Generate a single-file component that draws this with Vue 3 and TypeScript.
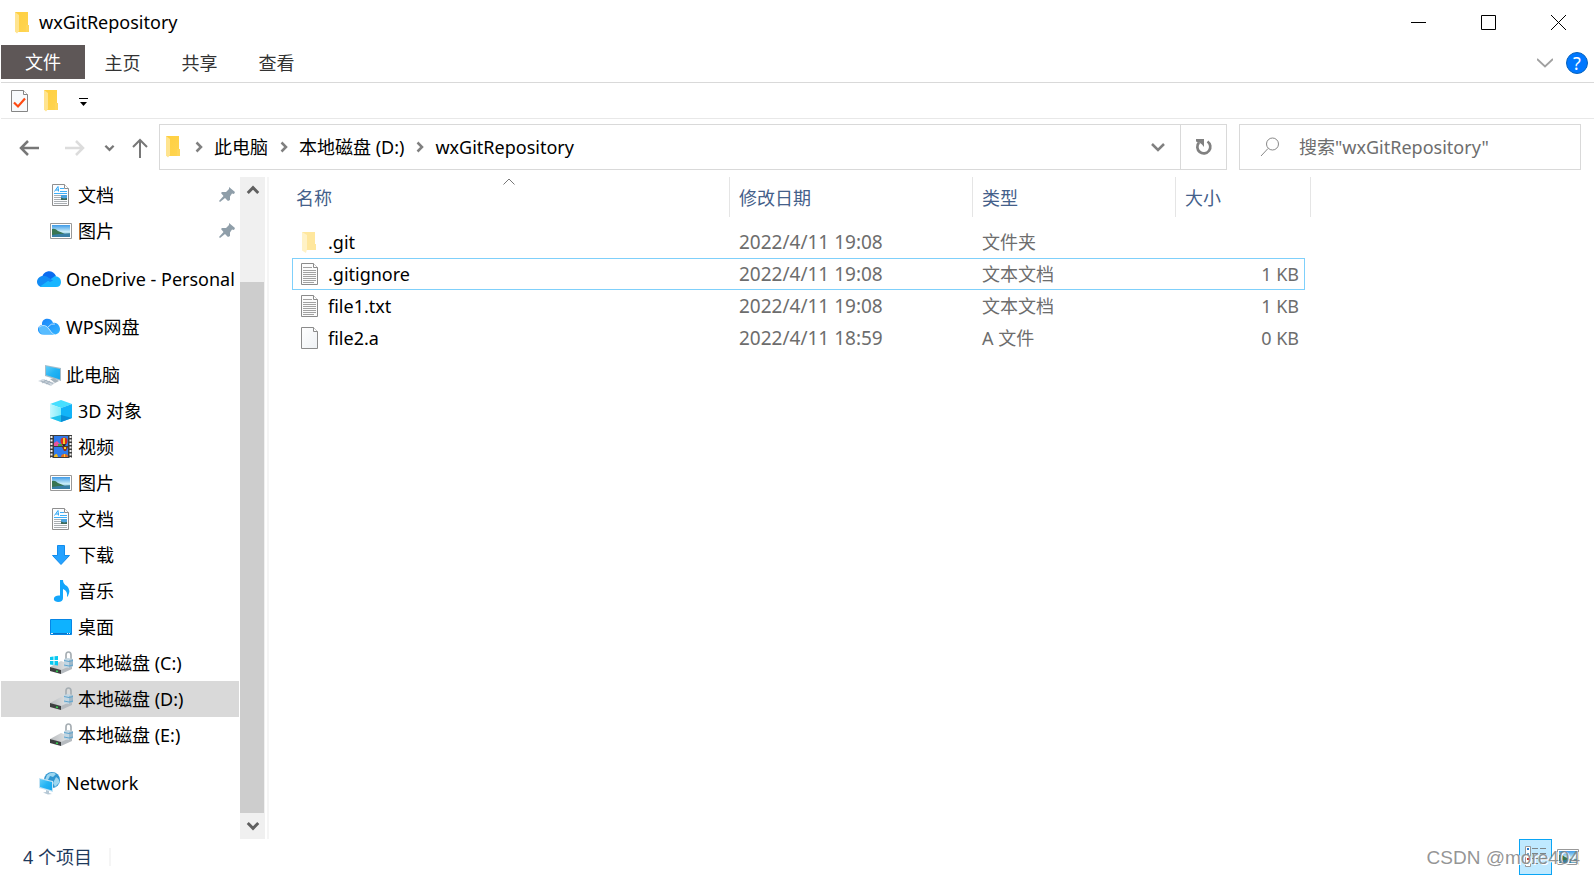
<script setup lang="ts">
import { ref } from 'vue'

interface NavItem {
  label: string
  icon: string
  level: 1 | 2
  pinned?: boolean
  spaced?: boolean
  selected?: boolean
}

interface FileRow {
  name: string
  icon: string
  date: string
  type: string
  size: string
  focused?: boolean
}

const title = 'wxGitRepository'
const query = ref('')
const tabs = ['主页', '共享', '查看']
const crumbs = ['此电脑', '本地磁盘 (D:)', title]

const nav: NavItem[] = [
  { label: '文档', icon: 'document', level: 2, pinned: true },
  { label: '图片', icon: 'picture', level: 2, pinned: true },
  { label: 'OneDrive - Personal', icon: 'onedrive', level: 1, spaced: true },
  { label: 'WPS网盘', icon: 'wps', level: 1, spaced: true },
  { label: '此电脑', icon: 'pc', level: 1, spaced: true },
  { label: '3D 对象', icon: 'cube', level: 2 },
  { label: '视频', icon: 'video', level: 2 },
  { label: '图片', icon: 'picture', level: 2 },
  { label: '文档', icon: 'document', level: 2 },
  { label: '下载', icon: 'download', level: 2 },
  { label: '音乐', icon: 'music', level: 2 },
  { label: '桌面', icon: 'desktop', level: 2 },
  { label: '本地磁盘 (C:)', icon: 'disk-system', level: 2 },
  { label: '本地磁盘 (D:)', icon: 'disk', level: 2, selected: true },
  { label: '本地磁盘 (E:)', icon: 'disk', level: 2 },
  { label: 'Network', icon: 'network', level: 1, spaced: true },
]

const files: FileRow[] = [
  { name: '.git', icon: 'folder-hidden', date: '2022/4/11 19:08', type: '文件夹', size: '' },
  { name: '.gitignore', icon: 'text', date: '2022/4/11 19:08', type: '文本文档', size: '1 KB', focused: true },
  { name: 'file1.txt', icon: 'text', date: '2022/4/11 19:08', type: '文本文档', size: '1 KB' },
  { name: 'file2.a', icon: 'blank', date: '2022/4/11 18:59', type: 'A 文件', size: '0 KB' },
]
</script>

<template>
  <svg class="sprite" aria-hidden="true">
    <defs>
      <linearGradient id="g-folder" x1="0" y1="0" x2="1" y2="1">
        <stop offset="0" stop-color="#ffcf3f" /><stop offset="1" stop-color="#ffd552" />
      </linearGradient>
      <linearGradient id="g-sky" x1="0" y1="0" x2="0" y2="1">
        <stop offset="0" stop-color="#3f9be8" /><stop offset="0.55" stop-color="#c9ecf7" /><stop offset="1" stop-color="#58a8c8" />
      </linearGradient>
      <linearGradient id="g-screen" x1="0" y1="0" x2="1" y2="1">
        <stop offset="0" stop-color="#62cdf8" /><stop offset="0.5" stop-color="#23b4f4" /><stop offset="1" stop-color="#12a5ee" />
      </linearGradient>
      <linearGradient id="g-wps" x1="0" y1="0" x2="1" y2="1">
        <stop offset="0" stop-color="#1480fa" /><stop offset="1" stop-color="#35b4ff" />
      </linearGradient>
      <linearGradient id="g-cube" x1="0" y1="0" x2="1" y2="0">
        <stop offset="0" stop-color="#c4f8ff" /><stop offset="1" stop-color="#7cecfb" />
      </linearGradient>
      <linearGradient id="g-disk" x1="0" y1="0" x2="1" y2="0">
        <stop offset="0" stop-color="#b9bcbf" /><stop offset="1" stop-color="#eceeef" />
      </linearGradient>
      <linearGradient id="g-page" x1="0" y1="0" x2="1" y2="1">
        <stop offset="0" stop-color="#ffffff" /><stop offset="1" stop-color="#eef1f4" />
      </linearGradient>
    </defs>

    <symbol id="i-folder" viewBox="0 0 24 24">
      <path d="M5 1h13v14h1v6H7z" fill="url(#g-folder)" />
      <path d="M5 1l4 3v16l-2 2.500-2-2z" fill="#ffe48f" />
      <path d="M16 14h3v7h-3z" fill="#ffd65a" />
    </symbol>
    <symbol id="i-folder-hidden" viewBox="0 0 24 24">
      <path d="M5 2h13v12h1v6H8z" fill="#ffe79d" />
      <path d="M5 2l5 3v14l-1 4-4-2.500z" fill="#fff2c6" />
    </symbol>
    <symbol id="i-blank" viewBox="0 0 24 24">
      <path d="M4.500 1.500h12l4 4v17h-16z" fill="url(#g-page)" stroke="#8b8b8b" />
      <path d="M16.500 1.500v4h4" fill="#fff" stroke="#8b8b8b" />
    </symbol>
    <symbol id="i-text" viewBox="0 0 24 24">
      <path d="M4.500 1.500h12l4 4v17h-16z" fill="#fcfcfc" stroke="#8b8b8b" />
      <path d="M16.500 1.500v4h4" fill="#fff" stroke="#8b8b8b" />
      <path d="M6 5.500h9M6 8.500h13M6 10.500h13M6 12.500h13M6 14.500h13M6 16.500h13M6 18.500h13M6 20.500h11" stroke="#a2a2a2" />
    </symbol>
    <symbol id="i-check" viewBox="0 0 24 24">
      <path d="M4.500 1.500h12l4 4v17h-16z" fill="#f8fafc" stroke="#858585" />
      <path d="M16.500 1.500v4h4" fill="#fff" stroke="#858585" />
      <path d="M7 13.500l4 4 7-8" fill="none" stroke="#ff4a12" stroke-width="2.200" />
    </symbol>
    <symbol id="i-document" viewBox="0 0 24 24">
      <path d="M3.500 1.500h12l4 4v17h-16z" fill="#fcfdff" stroke="#8f8f8f" />
      <path d="M15.500 1.500v4h4" fill="#fff" stroke="#8f8f8f" />
      <path d="M5.500 8.500l3.500-5 0.500 5M7 7h3" fill="none" stroke="#2aa5f5" />
      <path d="M11 5.500h4M11 8.500h7M5 10.500h13" stroke="#3fb0f8" />
      <path d="M5 12.500h7M5 14.500h7M5 16.500h7M5 18.500h13M5 20.500h13" stroke="#a9aeb2" />
      <path d="M12 12h6v5h-6z" fill="#4ba3df" /><path d="M12 14.500l3 1 3-0.500v2h-6z" fill="#3c6a5a" />
    </symbol>
    <symbol id="i-picture" viewBox="0 0 24 24">
      <path d="M1.500 4.500h21v15h-21z" fill="#fff" stroke="#999" />
      <path d="M3 6h18v12H3z" fill="url(#g-sky)" />
      <path d="M3 10q3-1 6 2 4 1.500 7 3l5-0.500V15q-8 1-12 1H3z" fill="#397552" />
      <path d="M3 16q8-2 18-1.500V18H3z" fill="#397fa5" />
    </symbol>
    <symbol id="i-onedrive" viewBox="0 0 24 24">
      <path d="M5 10C7 3 16 2 19 9L14 14z" fill="#0a6cf0" />
      <path d="M1.500 18.500C-2 15 1 9 6 9q2-0.500 4 1l9 6-5 4H5q-2 0-3.500-1.500z" fill="#128cf5" />
      <path d="M3 19.500L18 9Q24 10 24 15q0 5-5 5H5z" fill="#18b6ff" />
      <path d="M5 10q4-2 7 1l4 2.500-3 1.500z" fill="#128cf5" />
    </symbol>
    <symbol id="i-wps" viewBox="0 0 24 24">
      <path d="M5 10C4 2 15 2 16 8c5-1 7 4 7 6 0 4-3 5.500-6 5.500H6C0 19-1 11 5 10z" fill="url(#g-wps)" />
      <path d="M2 12q6-4 10 2t6 5.500H7q-6-1-5-7.500z" fill="#58bcff" />
      <path d="M2 12q6-4 10 2t6 5.500M11 12q3-4 7-3" fill="none" stroke="#d9f0ff" stroke-width="0.800" />
    </symbol>
    <symbol id="i-pc" viewBox="0 0 24 24">
      <path d="M8 2l16 3v13L8 13z" fill="#a6bdca" />
      <path d="M9 3l14 3v10.500L9 12z" fill="url(#g-screen)" />
      <path d="M13 16l4-1 5 3-4 2z" fill="#a7b3bc" />
      <path d="M1 18l5-2 12 4-4 3z" fill="#d0d8df" /><path d="M4 18l9 3.500M7 17l9 3.500M5 20l5-3M9 21l4-3" stroke="#98a7b6" stroke-width="0.700" />
    </symbol>
    <symbol id="i-cube" viewBox="0 0 24 24">
      <path d="M12 1l11 4-11 4L1 5z" fill="#46dfff" />
      <path d="M1 5l11 4v14L1 19z" fill="url(#g-cube)" />
      <path d="M23 5L12 9v14l11-4z" fill="#12b4f8" />
      <path d="M12 16l11 3-11 4z" fill="#0a8fd8" />
      <path d="M1 19l11-3v7z" fill="#20c2ec" />
    </symbol>
    <symbol id="i-video" viewBox="0 0 24 24">
      <path d="M1 0h22v23H1z" fill="#3c3c3c" />
      <path d="M2.500 1v22M21.500 1v22" stroke="#f0f0f0" stroke-width="2" stroke-dasharray="2 1.500" />
      <path d="M5 1h14v10H5zM5 12h14v10H5z" fill="#2f7bec" />
      <path d="M5 8l3-2 3 3 2-1 3 3H5z" fill="#e9539d" /><path d="M9 9h4v2H9z" fill="#4aa83c" />
      <circle cx="15" cy="6" r="3.500" fill="#d8301f" /><path d="M14 3h2v6h-2z" fill="#f5cd2d" />
      <path d="M13 9h4l-1 2h-2z" fill="#3a2a1c" />
      <path d="M13 12h6l-2 4h-2z" fill="#8b3021" /><path d="M15 12h2v2h-2z" fill="#ffd229" />
      <path d="M12 22q0-3 3.500-3t3.500 3z" fill="#e66a20" /><path d="M15 19h1v3h-1z" fill="#ffd229" />
      <path d="M5 22q0-3 3-3l1 3z" fill="#f7bc19" />
    </symbol>
    <symbol id="i-download" viewBox="0 0 24 24">
      <path d="M8.500 2.500h7v10h5L12 21.500l-8.500-9h5z" fill="#25a2ff" stroke="#118ced" />
    </symbol>
    <symbol id="i-music" viewBox="0 0 24 24">
      <path d="M11 1h3q0 4 4 6 4 4 1 10l-1 1q1-6-4-8v9q0 4-5 4-5-0.500-4-4 1-3 6-2.500z" fill="#13a6fb" />
    </symbol>
    <symbol id="i-desktop" viewBox="0 0 24 24">
      <path d="M1.500 4.500h21v15h-21z" fill="#0eb2ff" stroke="#0786e5" />
      <path d="M2 18.500h20" stroke="#0a74c8" /><path d="M2 18.500h2M18 18.500h1M20 18.500h1" stroke="#e8f6ff" />
    </symbol>
    <symbol id="i-disk" viewBox="0 0 24 24">
      <path d="M1 16L12 10l12 4-12 6z" fill="url(#g-disk)" />
      <path d="M1 16l11 3v4L1 20z" fill="#3d3f40" /><path d="M12 19l11-5v4l-11 5z" fill="#b6bbc0" />
      <path d="M7 20l2 0.500" stroke="#35d04f" stroke-width="1.500" />
      <path d="M17 9V4q0-3 2.500-3T22 4v5" fill="none" stroke="#a6aeb3" stroke-width="1.700" />
      <path d="M15 8l4-1 5 1v7l-4 2-5-1z" fill="#c3d6e2" /><path d="M20 9l4-1v7l-4 2z" fill="#9fb8c8" /><path d="M15 9.500l5 1 4-1M15 14l5 1 4-1" fill="none" stroke="#5fa5cf" />
    </symbol>
    <symbol id="i-disk-system" viewBox="0 0 24 24">
      <use href="#i-disk" width="24" height="24" />
      <path d="M1 6l3.500-0.500V9H1zM5.500 5.300L9 5v4H5.500zM1 10h3.500v4L1 13.500zM5.500 10H9v4.500l-3.500-0.400z" fill="#08c8f1" />
    </symbol>
    <symbol id="i-network" viewBox="0 0 24 24">
      <circle cx="15" cy="9" r="8" fill="#2f95d0" />
      <path d="M10 4q5-4 9-1l-3 3-3-1-2 4H8zM19 6q4 2 3 6l-4 4-2-4z" fill="#9bd6f0" />
      <path d="M2 7l14 3v11L2 17z" fill="#c4e4f5" /><path d="M3 8l12 3v8.500L3 16z" fill="url(#g-screen)" />
      <path d="M9 19l3 1v2l3 1-4 0.500-5-2 3-0.500z" fill="#b6c8d5" />
    </symbol>
    <symbol id="i-pin" viewBox="0 0 16 16">
      <path d="M10 0l6 5-1 2-2-0.500-2 3V13L9 14l-3-3-5 4-1-1 4.500-5L2 6l1-1h4l3-3z" fill="#8f9ea9" />
    </symbol>
    <symbol id="i-chevron" viewBox="0 0 12 12">
      <path d="M1.500 3.500L6 8l4.500-4.500" fill="none" stroke="currentColor" stroke-width="2.500" />
    </symbol>
  </svg>

  <main class="window">
    <header class="title-bar">
      <svg class="icon"><use href="#i-folder" /></svg>
      <h1>{{ title }}</h1>
      <div class="window-buttons">
        <button aria-label="最小化"><svg viewBox="0 0 15 15"><path d="M0 7.500h15" /></svg></button>
        <button aria-label="最大化"><svg viewBox="0 0 15 15"><path d="M.5.500h14v14H.5z" /></svg></button>
        <button aria-label="关闭"><svg viewBox="0 0 15 15"><path d="M0 0l15 15M15 0L0 15" /></svg></button>
      </div>
    </header>

    <nav class="ribbon">
      <button class="file-tab">文件</button>
      <button v-for="tab in tabs" :key="tab" class="tab">{{ tab }}</button>
      <button class="expand" aria-label="展开功能区">
        <svg viewBox="0 0 16 10"><path d="M0 1l8 7.500L16 1" fill="none" stroke="#a0a0a0" stroke-width="1.800" /></svg>
      </button>
      <button class="help" aria-label="帮助">?</button>
    </nav>

    <div class="quick-bar">
      <button aria-label="属性"><svg class="icon"><use href="#i-check" /></svg></button>
      <button aria-label="新建文件夹"><svg class="icon"><use href="#i-folder" /></svg></button>
      <button class="customize" aria-label="自定义快速访问工具栏">
        <svg viewBox="0 0 9 9"><path d="M0 0h9v1H0zM1 4h7L4.500 8z" /></svg>
      </button>
    </div>

    <div class="location">
      <div class="history">
        <button class="back" aria-label="后退"><svg viewBox="0 0 20 16"><path d="M20 8H2M9 1L2 8l7 7" /></svg></button>
        <button class="forward" aria-label="前进"><svg viewBox="0 0 20 16"><path d="M0 8h18M11 1l7 7-7 7" /></svg></button>
        <button class="recent" aria-label="最近位置"><svg><use href="#i-chevron" /></svg></button>
        <button class="up" aria-label="向上"><svg viewBox="0 0 16 20"><path d="M8 20V2M1 9l7-7 7 7" /></svg></button>
      </div>
      <div class="address">
        <svg class="icon"><use href="#i-folder" /></svg>
        <template v-for="crumb in crumbs" :key="crumb">
          <svg class="separator" viewBox="0 0 8 12"><path d="M1.500 1.500L6 6l-4.500 4.500" /></svg>
          <button class="crumb">{{ crumb }}</button>
        </template>
        <button class="drop" aria-label="以前的位置"><svg viewBox="0 0 14 9"><path d="M1 1l6 6 6-6" /></svg></button>
        <button class="refresh" aria-label="刷新">
          <svg viewBox="0 0 18 18"><path d="M12.500 3.500A6.500 6.500 0 1 1 4 4.500" fill="none" stroke="#808080" stroke-width="2.700" /><path d="M1 1h8v8L7 6.500 5 5 1 3.500z" fill="#808080" /></svg>
        </button>
      </div>
      <label class="search">
        <svg viewBox="0 0 20 20"><circle cx="12.500" cy="7" r="6" /><path d="M8 11.500L1 19" /></svg>
        <input v-model="query" type="text" :placeholder="`搜索&quot;${title}&quot;`" aria-label="搜索" />
      </label>
    </div>

    <div class="body">
      <nav class="tree">
        <a
          v-for="(item, i) in nav"
          :key="i"
          href="#"
          :class="['node', `level-${item.level}`, { spaced: item.spaced, selected: item.selected }]"
        >
          <svg class="icon"><use :href="`#i-${item.icon}`" /></svg>
          <span>{{ item.label }}</span>
          <svg v-if="item.pinned" class="pin"><use href="#i-pin" /></svg>
        </a>
      </nav>
      <div class="scrollbar">
        <button class="scroll-up" aria-label="向上滚动"><svg><use href="#i-chevron" /></svg></button>
        <div class="track"></div>
        <div class="thumb"></div>
        <button class="scroll-down" aria-label="向下滚动"><svg><use href="#i-chevron" /></svg></button>
      </div>
      <section class="listing">
        <table>
          <colgroup>
            <col class="c-name" /><col class="c-date" /><col class="c-type" /><col class="c-size" /><col class="c-edge" />
          </colgroup>
          <thead>
            <tr>
              <th class="sorted">
                名称
                <svg viewBox="0 0 12 7"><path d="M.5 6.500L6 1l5.500 5.500" /></svg>
              </th>
              <th>修改日期</th>
              <th>类型</th>
              <th>大小</th>
              <td></td>
            </tr>
          </thead>
          <tbody>
            <tr v-for="file in files" :key="file.name" :class="{ focused: file.focused }">
              <td>
                <div class="file">
                  <svg class="icon"><use :href="`#i-${file.icon}`" /></svg>
                  <span>{{ file.name }}</span>
                </div>
              </td>
              <td class="date">{{ file.date }}</td>
              <td>{{ file.type }}</td>
              <td class="size">{{ file.size }}</td>
            </tr>
          </tbody>
        </table>
      </section>
    </div>

    <footer class="status">
      <span class="count">4 个项目</span>
      <div class="views">
        <button class="details" aria-label="详细信息">
          <svg viewBox="0 0 22 22">
            <path d="M.5.500h5v20h-5z" fill="#fff" stroke="#999" />
            <path d="M2 2h2v2H2z" fill="#2277cc" /><path d="M2 7h2v2H2z" fill="#70a8c8" /><path d="M2 12h2v2H2z" fill="#c23a28" /><path d="M2 17h2v2H2z" fill="#4b9138" />
            <path d="M7 2.500h6M15 2.500h6M7 7.500h6M15 7.500h6M7 12.500h6M15 12.500h6M7 17.500h6M15 17.500h6" stroke="#7d8588" />
          </svg>
        </button>
        <button class="thumbs" aria-label="大图标"><svg class="icon"><use href="#i-picture" /></svg></button>
      </div>
      <span class="watermark">CSDN @more404</span>
    </footer>
  </main>
</template>

<style>
body {
  margin: 0;
  background: #fff;
}
</style>

<style scoped>
.sprite {
  position: absolute;
  width: 0;
  height: 0;
}
.window {
  display: flex;
  flex-direction: column;
  min-height: 100vh;
  padding-left: 1px;
  box-sizing: border-box;
  background: #fff;
  color: #000;
  font: 18px/24px "Noto Sans", "Noto Sans CJK SC", sans-serif;
}
button {
  display: flex;
  align-items: center;
  justify-content: center;
  margin: 0;
  padding: 0;
  border: 0;
  background: none;
  color: inherit;
  font: inherit;
}
svg {
  display: block;
  flex: none;
}
.icon {
  width: 24px;
  height: 24px;
}

.title-bar {
  display: flex;
  align-items: center;
  height: 45px;
  padding-left: 9px;
}
.title-bar h1 {
  margin: 0 auto 0 5px;
  padding-bottom: 2px;
  font-size: 18px;
  font-weight: 400;
}
.window-buttons {
  display: flex;
  margin-right: 1px;
}
.window-buttons button {
  width: 70px;
  height: 45px;
}
.window-buttons svg {
  width: 15px;
  height: 15px;
  fill: none;
  stroke: #000;
}

.ribbon {
  display: flex;
  align-items: flex-start;
  height: 37px;
  border-bottom: 1px solid #d9d9d9;
  color: #333;
}
.file-tab {
  width: 84px;
  height: 34px;
  margin-right: -1px;
  background: #5e5757;
  color: #fff;
}
.tab {
  width: 77px;
  height: 35px;
}
.expand {
  width: 24px;
  height: 36px;
  margin-left: auto;
}
.expand svg {
  width: 16px;
  height: 10px;
}
.help {
  width: 22px;
  height: 22px;
  margin: 7px 6px 0 9px;
  border: 1px solid #0562bd;
  border-radius: 50%;
  background: #0078ff;
  color: #fff;
}

.quick-bar {
  display: flex;
  align-items: center;
  gap: 8px;
  height: 35px;
  padding-left: 6px;
  border-bottom: 1px solid #e8e8e8;
}
.customize {
  width: 24px;
  height: 28px;
  padding-top: 4px;
  box-sizing: border-box;
}
.customize svg {
  width: 9px;
  height: 9px;
}

.location {
  display: grid;
  grid-template-columns: 146px 1068fr 342fr;
  gap: 12px;
  align-items: center;
  height: 58px;
  padding: 0 13px 2px 0;
  box-sizing: border-box;
}
.history {
  display: flex;
  align-items: center;
  padding-top: 2px;
  color: #777;
}
.history svg {
  fill: none;
  stroke: currentColor;
  stroke-width: 2.500;
}
.back svg,
.forward svg {
  width: 20px;
  height: 16px;
}
.back {
  margin-left: 18px;
}
.forward {
  margin-left: 26px;
  color: #dcdcdc;
}
.recent {
  margin-left: 19px;
}
.recent svg {
  width: 11px;
  height: 12px;
}
.up {
  margin-left: 17px;
}
.up svg {
  width: 16px;
  height: 20px;
  stroke-width: 2;
}
.address,
.search {
  display: flex;
  align-items: center;
  height: 46px;
  min-width: 0;
  box-sizing: border-box;
  border: 1px solid #d9d9d9;
}
.address {
  padding-left: 1px;
}
.separator {
  width: 8px;
  height: 12px;
  margin: 0 11px 0 12px;
}
.address > .icon + .separator {
  margin-left: 10px;
}
.separator path,
.drop path {
  fill: none;
  stroke: #808080;
  stroke-width: 2.500;
}
.crumb {
  white-space: nowrap;
}
.drop {
  width: 44px;
  height: 44px;
  margin-left: auto;
}
.drop svg {
  width: 14px;
  height: 9px;
}
.refresh {
  width: 46px;
  height: 44px;
  border-left: 1px solid #d9d9d9;
}
.refresh svg {
  width: 18px;
  height: 18px;
}
.search {
  padding-left: 20px;
}
.search svg {
  width: 20px;
  height: 20px;
  fill: none;
  stroke: #888;
  stroke-width: 1;
}
.search input {
  flex: 1;
  min-width: 0;
  height: 40px;
  margin-left: 19px;
  padding: 0;
  border: 0;
  outline: 0;
  background: none;
  font: inherit;
}
.search input::placeholder {
  color: #6d6d6d;
  opacity: 1;
}

.body {
  display: flex;
  flex: 1;
}
.tree {
  width: 238px;
  margin-right: 1px;
}
.node {
  display: flex;
  align-items: center;
  gap: 5px;
  height: 36px;
  color: inherit;
  text-decoration: none;
  white-space: nowrap;
}
.level-1 {
  padding-left: 36px;
}
.level-2 {
  padding-left: 48px;
}
.spaced {
  margin-top: 12px;
}
.selected {
  background: #d9d9d9;
}
.pin {
  width: 16px;
  height: 16px;
  margin: 0 4px 0 auto;
}
.scrollbar {
  display: flex;
  flex-direction: column;
  width: 25px;
  margin-right: 2px;
  background: #f0f0f0;
  color: #606060;
}
.scrollbar button {
  height: 26px;
}
.scrollbar svg {
  width: 14px;
  height: 14px;
}
.scroll-up svg {
  transform: rotate(180deg);
}
.track {
  flex: 79;
}
.thumb {
  flex: 531;
  margin-right: 1px;
  background: #cdcdcd;
}
.listing {
  flex: 1;
  min-width: 0;
  padding-left: 23px;
  border-left: 2px solid #f5f5f5;
}
table {
  width: 1019px;
  table-layout: fixed;
  border-spacing: 0;
}
.c-name {
  width: 438px;
}
.c-date {
  width: 243px;
}
.c-type {
  width: 203px;
}
.c-size {
  width: 129px;
}
.c-edge {
  width: 6px;
}
thead th,
thead td {
  height: 40px;
  box-sizing: border-box;
  padding: 2px 0 0 9px;
  border-right: 1px solid #e5e5e5;
  color: #44608a;
  font-weight: 400;
  text-align: left;
}
thead th:nth-child(4) {
  border-right: 0;
}
thead td {
  padding: 0;
}
thead .sorted {
  position: relative;
  padding-left: 4px;
}
.sorted svg {
  position: absolute;
  top: 1px;
  left: 50%;
  width: 12px;
  height: 7px;
  margin-left: -8px;
  fill: none;
  stroke: #777;
}
tbody::before {
  content: "";
  display: block;
  height: 9px;
}
tbody td {
  height: 32px;
  box-sizing: border-box;
  padding: 0 0 0 9px;
  color: #6d6d6d;
}
tbody td:first-child {
  padding-left: 5px;
}
.file {
  display: flex;
  align-items: center;
  gap: 7px;
  color: #000;
}
tbody .date {
  font-size: 19px;
}
tbody .size {
  padding-right: 6px;
  text-align: right;
}
.focused td {
  border: solid #7fd0fb;
  border-width: 1px 0;
}
.focused td:first-child {
  padding-left: 4px;
  border-left-width: 1px;
}
.focused td:last-child {
  padding-right: 5px;
  border-right-width: 1px;
}

.status {
  position: relative;
  display: flex;
  align-items: center;
  height: 36px;
  padding-left: 22px;
}
.count {
  padding-right: 17px;
  border-right: 2px solid #f5f5f5;
  color: #1e395b;
  line-height: 18px;
}
.views {
  display: flex;
  align-items: center;
  gap: 4px;
  margin: 0 14px 0 auto;
}
.details {
  width: 33px;
  height: 36px;
  box-sizing: border-box;
  border: 1px solid #0aa5f5;
  background: #bfe9ff;
}
.details svg {
  width: 22px;
  height: 22px;
}
.watermark {
  position: absolute;
  right: 14px;
  bottom: 5px;
  color: rgba(130, 130, 130, 0.85);
  font: 19px/24px "Liberation Sans", sans-serif;
  text-shadow: 1px 1px 0 #fff;
}
</style>
